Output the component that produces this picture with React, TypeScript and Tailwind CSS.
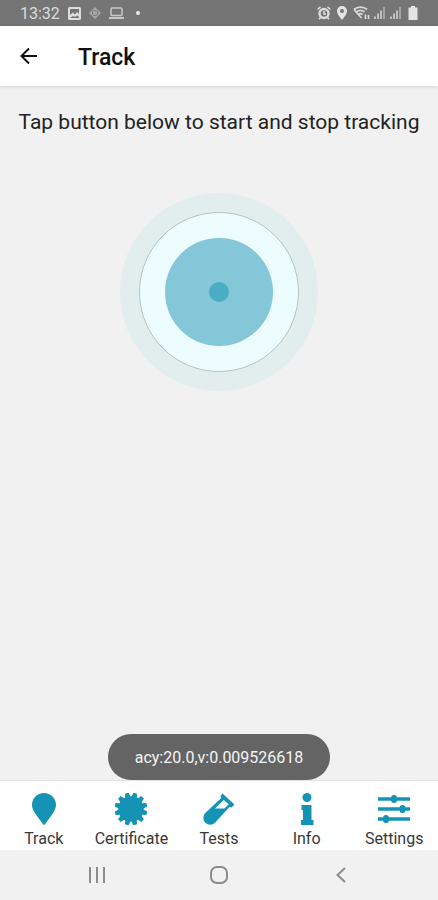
import { useState, type ReactNode } from "react";

const ACCENT = "#1593b5";

interface Tab {
  label: string;
  icon: ReactNode;
}

// 12 blunt teeth around a solid disc
function sealPoints() {
  const points: string[] = [];
  const add = (r: number, deg: number) => {
    const a = (deg * Math.PI) / 180;
    points.push(`${(16 + r * Math.cos(a)).toFixed(2)},${(16 + r * Math.sin(a)).toFixed(2)}`);
  };
  for (let i = 0; i < 12; i++) {
    const mid = i * 30 + 15;
    add(12.8, mid - 12);
    add(16.5, mid - 6.5);
    add(16.5, mid + 6.5);
    add(12.8, mid + 12);
  }
  return points.join(" ");
}

const tabs: Tab[] = [
  {
    label: "Track",
    icon: <path d="M16 0C9.200 0 4 5.200 4 11.800c0 3.200 1.200 5.600 3 8.400L15 31.300c.5.7 1.500.7 2 0L25 20.200c1.800-2.800 3-5.200 3-8.400C28 5.200 22.800 0 16 0Z" />
  },
  { label: "Certificate", icon: <polygon points={sealPoints()} /> },
  {
    label: "Tests",
    icon: (
      <path
        fillRule="evenodd"
        d="M19.500.500 31.500 11.500 28.500 14.500 26.500 14 12 29.700a6.800 6.800 0 0 1-9.700-9.600L18 5.200 17.500 3ZM20.800 7 12 15.600H21.300L25.800 11.200Z"
      />
    )
  },
  {
    label: "Info",
    icon: (
      <>
        <circle cx="16" cy="4.500" r="4.500" />
        <path d="M10.500 12H20.500V27H22.500V32H10V27H12V17H10.500Z" />
      </>
    )
  },
  {
    label: "Settings",
    icon: (
      <g>
        <path d="M0 4.300H32V7.700H0ZM0 14.300H32V17.700H0ZM0 24.300H32V27.700H0Z" />
        <rect x="13.200" y="2" width="5.600" height="8" rx="2.500" />
        <rect x="21.700" y="12" width="5.600" height="8" rx="2.500" />
        <rect x="5.200" y="22" width="5.600" height="8" rx="2.500" />
      </g>
    )
  }
];

function StatusBar() {
  return (
    <div className="flex h-[26px] shrink-0 items-center justify-between bg-[#757575] pr-[18px] pl-5 text-[#dcdcdc]">
      <div className="flex items-center gap-2">
        <span className="pt-[2px] text-[16px] leading-6">13:32</span>
        <svg width="13" height="13" viewBox="0 0 13 13" fill="currentColor">
          <path fillRule="evenodd" d="M1.500 0h10A1.500 1.500 0 0 1 13 1.500v10a1.500 1.500 0 0 1-1.500 1.500h-10A1.500 1.500 0 0 1 0 11.500v-10A1.500 1.500 0 0 1 1.500 0ZM2 2v6l3-2.500 2 2L9 5l2 2V2ZM2 11h9V10L9 8.500 7 10 5 9Z" />
        </svg>
        <svg width="12" height="12" viewBox="0 0 12 12" fill="#a8a8a8">
          <path fillRule="evenodd" d="M6 0 12 6 6 12 0 6ZM6 3A3 3 0 1 0 6 9 3 3 0 0 0 6 3Z" />
          <circle cx="6" cy="6" r="2.200" />
        </svg>
        <svg width="15" height="12" viewBox="0 0 15 12" fill="none" stroke="#c8c8c8" strokeWidth="1.500">
          <rect x="2" y="1" width="11" height="7.500" rx="1" />
          <path d="M0 11H15" strokeWidth="2" />
        </svg>
        <span className="ml-1 size-1 rounded-full bg-[#e8e8e8]" />
      </div>
      <div className="flex items-center gap-1">
        <svg width="14" height="14" viewBox="0 0 14 14" fill="none" stroke="currentColor">
          <circle cx="7" cy="7.500" r="4.500" strokeWidth="2.400" />
          <path d="M.700 3.500 3.500.900M10.500.900l2.800 2.600M3.500 11.500 2 13.200M10.500 11.500l1.500 1.700M7 5v3h2" strokeWidth="1.600" />
        </svg>
        <svg width="14" height="14" viewBox="0 0 14 14" fill="#e4e4e4">
          <path fillRule="evenodd" d="M7 0a5 5 0 0 0-5 5c0 3.500 5 9 5 9s5-5.500 5-9a5 5 0 0 0-5-5Zm0 3a2 2 0 1 1 0 4 2 2 0 0 1 0-4Z" />
        </svg>
        <svg width="17" height="14" viewBox="0 0 17 14" fill="none" stroke="currentColor" strokeWidth="1.700">
          <path d="M1 3.500C4.500.300 10.500.300 14 3.500M3.500 6C6 4 9 4 11.500 6M5.500 8.500c1.300-1 2.700-1 4 0M1 3.500 8.500 12" />
          <path d="M12.500 13V8.500M15.500 13V9" strokeWidth="1.600" />
        </svg>
        {[0, 1].map(i => (
          <svg key={i} width="12" height="12" viewBox="0 0 12 12" fill="#c0c0c0">
            <path d="M0 9.500H2V12H0ZM3 6.500H5V12H3ZM6 3.500H8V12H6Z" />
            <path d="M9 0H11V12H9Z" fill="#a4a4a4" />
          </svg>
        ))}
        <svg width="14" height="14" viewBox="0 0 14 14" fill="#e4e4e4">
          <path d="M5 0H9V1.500H11.500V14H2.500V1.500H5Z" />
        </svg>
      </div>
    </div>
  );
}

function TabBar({ active, onSelect }: { active: string; onSelect: (label: string) => void }) {
  return (
    <nav className="grid h-[70px] shrink-0 grid-cols-5 border-t border-[#e4e4e4] bg-white">
      {tabs.map(tab => (
        <button
          key={tab.label}
          aria-current={active === tab.label ? "page" : undefined}
          onClick={() => onSelect(tab.label)}
          className="flex cursor-pointer flex-col items-center gap-[2px] pt-3 text-[16px] leading-6 text-[#383838]"
        >
          <svg width="32" height="32" viewBox="0 0 32 32" fill={ACCENT} className="shrink-0">
            {tab.icon}
          </svg>
          {tab.label}
        </button>
      ))}
    </nav>
  );
}

export default function App() {
  const [active, setActive] = useState("Track");
  const [tracking, setTracking] = useState(true);

  return (
    <div className="flex min-h-screen flex-col bg-[#f1f1f1] font-['Roboto',sans-serif]">
      <StatusBar />

      {/* Title bar */}
      <header className="flex h-[60px] shrink-0 items-center bg-white pl-5 shadow-[0_1px_3px_rgba(0,0,0,0.12)]">
        <button aria-label="Back" className="cursor-pointer">
          <svg width="18" height="18" viewBox="0 0 18 18" fill="none" stroke="#111" strokeWidth="2">
            <path d="M17 9H2M9 1.500 1.500 9 9 16.500" />
          </svg>
        </button>
        <h1 className="ml-10 pt-1 text-[23px] leading-8 font-medium text-[#111]">Track</h1>
      </header>

      <main className="relative flex flex-1 flex-col items-center pt-5">
        <p className="text-[21px] leading-8 whitespace-nowrap text-[#222]">
          Tap button below to start and stop tracking
        </p>
        <button
          aria-label="Start or stop tracking"
          aria-pressed={tracking}
          onClick={() => setTracking(!tracking)}
          className="mt-[55px] flex size-[198px] cursor-pointer items-center justify-center rounded-full bg-[#e2edee]"
        >
          <span className="flex size-40 items-center justify-center rounded-full border border-[#b5c3c5] bg-[#edfdff]">
            <span className="flex size-[108px] items-center justify-center rounded-full bg-[#84c7d9]">
              <span className="size-5 rounded-full bg-[#4badc5]" />
            </span>
          </span>
        </button>

        {/* Toast with the latest reading */}
        <div role="status" className="absolute bottom-0 rounded-full bg-[#646464] px-[27px] pt-3 pb-[10px] text-[16px] leading-6 text-[#f4f4f4]">
          acy:20.0,v:0.009526618
        </div>
      </main>

      <TabBar active={active} onSelect={setActive} />

      {/* System navigation */}
      <div className="grid h-[50px] shrink-0 grid-cols-[1fr_50px_1fr] items-center text-[#8c8c8c]">
        <button aria-label="Recent apps" className="flex cursor-pointer justify-center">
          <svg width="16" height="16" viewBox="0 0 16 16" stroke="currentColor" strokeWidth="2">
            <path d="M1 0V16M8 0V16M15 0V16" />
          </svg>
        </button>
        <button aria-label="Home" className="flex cursor-pointer justify-center">
          <svg width="18" height="18" viewBox="0 0 18 18" fill="none" stroke="currentColor" strokeWidth="2">
            <rect x="1" y="1" width="16" height="16" rx="6" />
          </svg>
        </button>
        <button aria-label="System back" className="flex cursor-pointer justify-center">
          <svg width="10" height="16" viewBox="0 0 10 16" fill="none" stroke="currentColor" strokeWidth="2">
            <path d="M9 1 1.500 8 9 15" />
          </svg>
        </button>
      </div>
    </div>
  );
}
